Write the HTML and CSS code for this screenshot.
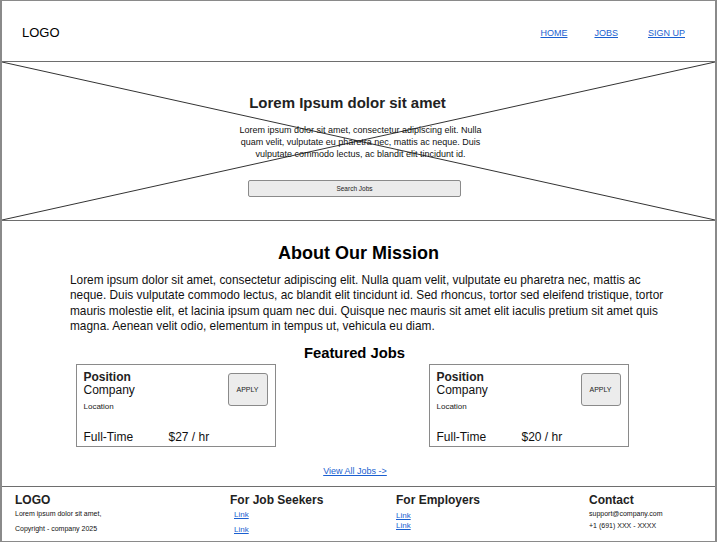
FILE: index.html
```html
<!DOCTYPE html>
<html>
<head>
<meta charset="utf-8">
<link rel="stylesheet" href="styles.css">
</head>
<body>
<div class="frame">
  <header class="header">
    <div class="logo">LOGO</div>
    <nav class="nav">
      <a href="#">HOME</a>
      <a href="#">JOBS</a>
      <a href="#">SIGN UP</a>
    </nav>
  </header>
  <section class="hero">
    <svg class="hero-x" viewBox="0 0 100 100" preserveAspectRatio="none">
      <line x1="0" y1="0" x2="100" y2="100" vector-effect="non-scaling-stroke"/>
      <line x1="100" y1="0" x2="0" y2="100" vector-effect="non-scaling-stroke"/>
    </svg>
    <div class="hero-content">
      <h1 class="hero-title">Lorem Ipsum dolor sit amet</h1>
      <p class="hero-text">Lorem ipsum dolor sit amet, consectetur adipiscing elit. Nulla quam velit, vulputate eu pharetra nec, mattis ac neque. Duis vulputate commodo lectus, ac blandit elit tincidunt id.</p>
      <button class="search-btn">Search Jobs</button>
    </div>
  </section>
  <main class="main">
    <h2 class="mission-title">About Our Mission</h2>
    <p class="mission-text">Lorem ipsum dolor sit amet, consectetur adipiscing elit. Nulla quam velit, vulputate eu pharetra nec, mattis ac<br>neque. Duis vulputate commodo lectus, ac blandit elit tincidunt id. Sed rhoncus, tortor sed eleifend tristique, tortor<br>mauris molestie elit, et lacinia ipsum quam nec dui. Quisque nec mauris sit amet elit iaculis pretium sit amet quis<br>magna. Aenean velit odio, elementum in tempus ut, vehicula eu diam.</p>
    <h3 class="featured-title">Featured Jobs</h3>
    <div class="cards">
      <div class="card">
        <div class="card-top">
          <div>
            <div class="position">Position</div>
            <div class="company">Company</div>
            <div class="location">Location</div>
          </div>
          <button class="apply">APPLY</button>
        </div>
        <div class="card-bottom">
          <span class="type">Full-Time</span>
          <span class="rate">$27 / hr</span>
        </div>
      </div>
      <div class="card">
        <div class="card-top">
          <div>
            <div class="position">Position</div>
            <div class="company">Company</div>
            <div class="location">Location</div>
          </div>
          <button class="apply">APPLY</button>
        </div>
        <div class="card-bottom">
          <span class="type">Full-Time</span>
          <span class="rate">$20 / hr</span>
        </div>
      </div>
    </div>
    <div class="view-all"><a href="#">View All Jobs -&gt;</a></div>
  </main>
  <footer class="footer">
    <div class="fcol">
      <div class="flogo">LOGO</div>
      <div class="fsmall">Lorem ipsum dolor sit amet,</div>
      <div class="fsmall copy">Copyright - company 2025</div>
    </div>
    <div class="fcol seekers">
      <div class="fhead">For Job Seekers</div>
      <a class="flink" href="#">Link</a>
      <a class="flink gap" href="#">Link</a>
    </div>
    <div class="fcol employers">
      <div class="fhead">For Employers</div>
      <a class="flink" href="#">Link</a>
      <a class="flink" href="#">Link</a>
    </div>
    <div class="fcol">
      <div class="fhead">Contact</div>
      <div class="fsmall">support@company.com</div>
      <div class="fsmall">+1 (691) XXX - XXXX</div>
    </div>
  </footer>
</div>
</body>
</html>
```

FILE: styles.css
```css
* { box-sizing: border-box; }
html, body { margin: 0; padding: 0; background: #fff; }
body {
  font-family: "Liberation Sans", Arial, sans-serif;
  color: #000;
  width: 717px;
  height: 542px;
  overflow: hidden;
}
.frame {
  width: 717px;
  height: 542px;
  border: 1px solid #8a8a8a;
  border-left-width: 2px;
  border-right-width: 2px;
  display: flex;
  flex-direction: column;
}
a { color: #1a5fd0; }

.header {
  height: 61px;
  display: flex;
  align-items: center;
  justify-content: space-between;
  padding: 0 30px 0 20px;
  border-bottom: 1px solid #6e6e6e;
}
.logo { font-size: 13px; padding-top: 3px; }
.nav { display: flex; gap: 25px; padding-top: 4px; }
.nav a { font-size: 9px; text-decoration: underline; }
.nav a + a { margin-left: 2px; }
.nav a:last-child { margin-left: 5px; }

.hero {
  position: relative;
  height: 159px;
  border-bottom: 1px solid #6e6e6e;
}
.hero-x {
  position: absolute;
  left: 0; top: 0;
  width: 100%; height: 100%;
}
.hero-x line { stroke: #333; stroke-width: 1; }
.hero-content {
  position: relative;
  margin-left: 235px;
  width: 247px;
  padding-top: 32px;
}
.hero-title {
  margin: 0;
  font-size: 15px;
  font-weight: bold;
  color: #222;
  text-align: center;
  padding-right: 26px;
  line-height: 18px;
}
.hero-text {
  margin: 12px 0 0;
  font-size: 9px;
  line-height: 12px;
  text-align: center;
  color: #111;
}
.search-btn {
  display: block;
  margin: 20px 0 0 11px;
  width: 213px;
  height: 17px;
  font-family: "Liberation Sans", Arial, sans-serif;
  font-size: 6.5px;
  color: #222;
  background: #ebebeb;
  border: 1px solid #8a8a8a;
  border-radius: 2px;
  padding: 0;
}

.main {
  flex: 1;
  display: flex;
  flex-direction: column;
  align-items: center;
  border-bottom: 1px solid #6e6e6e;
}
.mission-title {
  margin: 21px 0 0;
  font-size: 18px;
  line-height: 22px;
  font-weight: bold;
}
.mission-text {
  align-self: flex-start;
  margin: 9px 0 0 68px;
  width: 630px;
  font-size: 11.85px;
  line-height: 15.3px;
  color: #111;
  white-space: nowrap;
}
.featured-title {
  margin: 11px 0 0 -8px;
  font-size: 14.8px;
  line-height: 17px;
  font-weight: bold;
}
.cards {
  margin-top: 2px;
  width: 553px;
  display: flex;
  justify-content: space-between;
  margin-left: -13px;
}
.card {
  width: 200px;
  height: 83px;
  border: 1px solid #8a8a8a;
  padding: 6px 7px 0 7px;
  display: flex;
  flex-direction: column;
}
.card-top {
  display: flex;
  justify-content: space-between;
  align-items: flex-start;
}
.position { font-size: 12px; font-weight: bold; line-height: 13px; color: #222; }
.company { font-size: 12px; line-height: 13px; color: #111; }
.location { font-size: 8px; line-height: 10px; margin-top: 5px; color: #222; }
.apply {
  width: 40px;
  height: 33px;
  margin-top: 2px;
  background: #ececec;
  border: 1px solid #8a8a8a;
  border-radius: 3px;
  font-family: "Liberation Sans", Arial, sans-serif;
  font-size: 7px;
  color: #222;
  padding: 0;
}
.card-bottom {
  margin-top: auto;
  margin-bottom: 2px;
  display: flex;
  font-size: 12px;
  line-height: 14px;
  color: #111;
}
.type { width: 85px; }
.view-all {
  margin-top: 19px;
  font-size: 9px;
  margin-left: -7px;
}

.footer {
  height: 54px;
  display: grid;
  grid-template-columns: 215px 166px 193px 1fr;
  padding: 6px 0 0 13px;
}
.fhead { font-size: 12px; font-weight: bold; line-height: 14px; color: #222; }
.flogo { font-size: 12px; font-weight: bold; line-height: 14px; color: #222; }
.fsmall { font-size: 7px; line-height: 10px; color: #111; margin-top: 2px; }
.fsmall.copy { margin-top: 5px; }
.flink { display: block; font-size: 8px; line-height: 10px; }
.seekers .flink { margin-left: 4px; margin-top: 3px; }
.seekers .flink.gap { margin-top: 5px; }
.employers .flink:first-of-type { margin-top: 4px; }
```
